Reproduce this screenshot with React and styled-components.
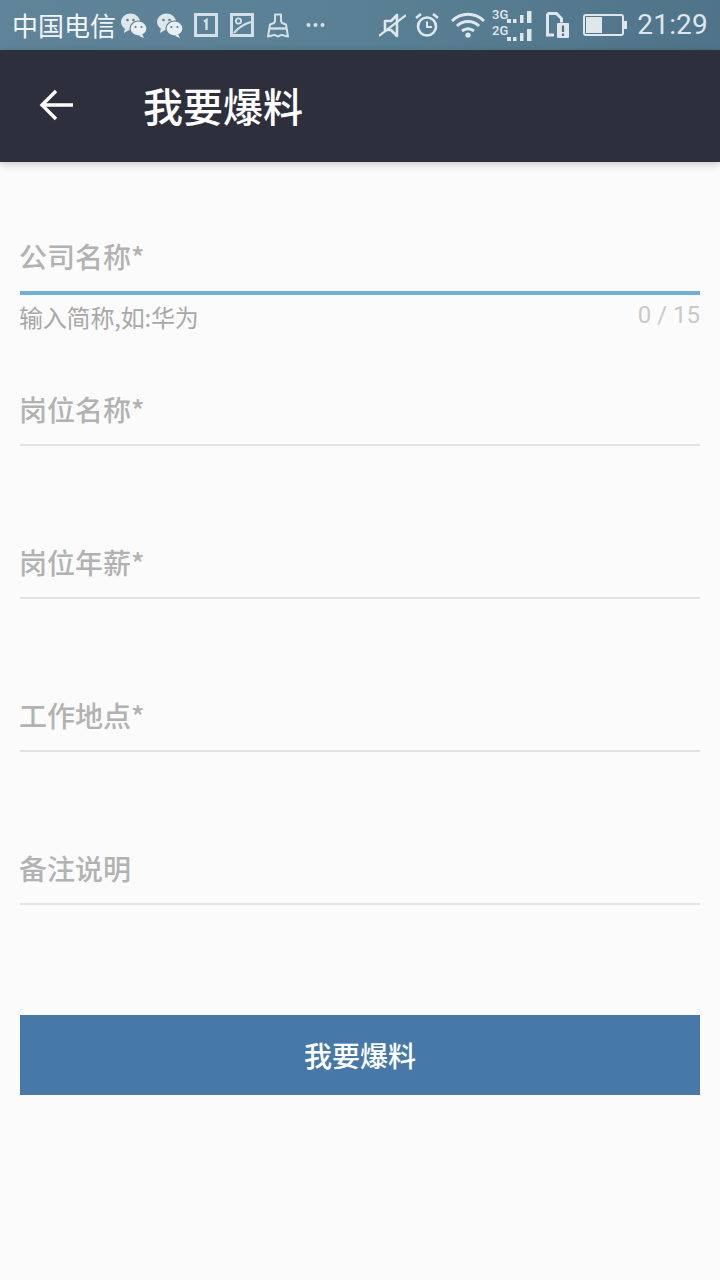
import React from 'react';
import styled, { createGlobalStyle } from 'styled-components';

const GlobalStyle = createGlobalStyle`
  html, body {
    margin: 0;
    padding: 0;
    background: #fbfbfb;
  }
  * {
    box-sizing: border-box;
  }
`;

const Page = styled.div`
  width: 720px;
  height: 1280px;
  overflow: hidden;
  background: #fbfbfb;
  font-family: "Noto Sans CJK SC", "Noto Sans", Roboto, sans-serif;
`;

const StatusBar = styled.div`
  height: 50px;
  display: flex;
  align-items: center;
  justify-content: space-between;
  padding: 0 12px 0 12px;
  background: linear-gradient(90deg, #5f8499 0%, #5a8095 50%, #4f7489 100%);
  color: #e8eef1;
`;

const StatusGroup = styled.div`
  display: flex;
  align-items: center;
`;

const Carrier = styled.span`
  font-size: 26px;
  line-height: 50px;
  color: #f2f5f7;
  margin-right: 5px;
`;

const Clock = styled.span`
  font-family: Roboto, sans-serif;
  font-size: 28px;
  line-height: 50px;
  letter-spacing: 0.2px;
  color: #dfe7eb;
  margin-left: 10px;
`;

const StatusIcon = styled.svg`
  display: block;
  flex: none;
  margin-left: ${(p) => p.$gap || 0}px;
`;

const TopBar = styled.header`
  height: 112px;
  display: flex;
  align-items: center;
  padding: 0 0 2px 39px;
  background: #2d303c;
  box-shadow: 0 2px 8px rgba(0, 0, 0, 0.22);
  position: relative;
`;

const BackIcon = styled.svg`
  display: block;
  flex: none;
  margin-right: 70px;
`;

const Title = styled.h1`
  margin: 0;
  font-size: 40px;
  line-height: 56px;
  font-weight: 500;
  color: #ffffff;
`;

const Form = styled.main`
  padding: 61px 20px 0;
  display: flex;
  flex-direction: column;
`;

const Field = styled.div`
  height: 153px;
`;

const Label = styled.div`
  font-size: 28px;
  font-weight: 500;
  line-height: 50px;
  padding-top: 8px;
  text-indent: -1px;
  color: #b2b2b2;
  border-bottom: ${(p) => (p.$active ? '4px solid #6fb0d9' : '2px solid #e2e2e2')};
  height: ${(p) => (p.$active ? '72px' : '70px')};
`;

const HelperRow = styled.div`
  display: flex;
  justify-content: space-between;
  align-items: flex-start;
`;

const Helper = styled.span`
  font-size: 24px;
  line-height: 44px;
  letter-spacing: -0.2px;
  margin-left: -1px;
  color: #a8a8a8;
`;

const Counter = styled.span`
  font-family: Roboto, sans-serif;
  font-size: 24px;
  line-height: 40px;
  color: #c9c9c9;
`;

const SubmitButton = styled.button`
  display: block;
  width: 100%;
  height: 80px;
  margin-top: 27px;
  padding: 0;
  border: 0;
  background: #4679a8;
  color: #ffffff;
  font-family: inherit;
  font-size: 28px;
  font-weight: 500;
`;

const Bubbles = ({ gap }) => (
  <StatusIcon $gap={gap} width="26" height="25" viewBox="0 0 26 25">
    <ellipse cx="9.5" cy="9" rx="9.5" ry="8.5" fill="#dfe7eb" />
    <path d="M4 15l-1 5 5-3z" fill="#dfe7eb" />
    <ellipse cx="17.5" cy="15.5" rx="8.5" ry="7.5" fill="#e8eef1" stroke="#5c8297" strokeWidth="1.2" />
    <path d="M21 21l2 4-5-2z" fill="#e8eef1" />
    <circle cx="6.5" cy="7" r="1.3" fill="#5c8297" />
    <circle cx="12.5" cy="7" r="1.3" fill="#5c8297" />
    <circle cx="14.5" cy="14" r="1.1" fill="#5c8297" />
    <circle cx="20.5" cy="14" r="1.1" fill="#5c8297" />
  </StatusIcon>
);

const fields = [
  { label: '公司名称*', active: true },
  { label: '岗位名称*' },
  { label: '岗位年薪*' },
  { label: '工作地点*' },
  { label: '备注说明' },
];

const App = () => (
  <Page>
    <GlobalStyle />
    <StatusBar>
      <StatusGroup>
        <Carrier>中国电信</Carrier>
        <Bubbles />
        <Bubbles gap={10} />
        <StatusIcon $gap={11} width="24" height="24" viewBox="0 0 24 24">
          <rect x="1.5" y="1.5" width="21" height="21" fill="none" stroke="#d5e0e6" strokeWidth="3" />
          <path d="M10 8.5l2.5-1.5v10" fill="none" stroke="#d5e0e6" strokeWidth="2.4" />
        </StatusIcon>
        <StatusIcon $gap={12} width="24" height="24" viewBox="0 0 24 24">
          <rect x="1.5" y="1.5" width="21" height="21" fill="none" stroke="#d5e0e6" strokeWidth="3" />
          <circle cx="8.5" cy="8" r="2.6" fill="none" stroke="#d5e0e6" strokeWidth="1.8" />
          <path d="M4 20 C9 14 14 11 21 9" fill="none" stroke="#d5e0e6" strokeWidth="2" />
        </StatusIcon>
        <StatusIcon $gap={13} width="22" height="25" viewBox="0 0 22 25">
          <path d="M8 1.5h6v6.5l1 2 4 1.5 2 12c-3 0-4-1.5-6-1.5s-3 1.5-4 1.5-2-1.5-4-1.5-4 1.5-6 1.5l2-12 4-1.5 1-2z" fill="none" stroke="#d5e0e6" strokeWidth="2" strokeLinejoin="round" />
          <path d="M2.5 15.5h17" stroke="#d5e0e6" strokeWidth="2.4" />
        </StatusIcon>
        <StatusIcon $gap={17} width="19" height="6" viewBox="0 0 19 6">
          <circle cx="2.5" cy="3" r="2" fill="#d5e0e6" />
          <circle cx="9.5" cy="3" r="2" fill="#d5e0e6" />
          <circle cx="16.5" cy="3" r="2" fill="#d5e0e6" />
        </StatusIcon>
      </StatusGroup>
      <StatusGroup>
        <StatusIcon width="27" height="25" viewBox="0 0 27 25">
          <path d="M6 8h6l6-6v21l-6-6H6z" fill="none" stroke="#dfe7eb" strokeWidth="2.6" strokeLinejoin="round" />
          <path d="M0 23L27 2" stroke="#dfe7eb" strokeWidth="2.2" />
        </StatusIcon>
        <StatusIcon $gap={9} width="24" height="24" viewBox="0 0 24 24">
          <circle cx="12" cy="13.5" r="9" fill="none" stroke="#dfe7eb" strokeWidth="2.6" />
          <path d="M12 8.5v5.5h5" fill="none" stroke="#dfe7eb" strokeWidth="2" />
          <path d="M1 5l5-4M23 5l-5-4" stroke="#dfe7eb" strokeWidth="2.6" />
        </StatusIcon>
        <StatusIcon $gap={12} width="34" height="26" viewBox="0 0 34 26">
          <path d="M1 9C10 0 24 0 33 9M6 14c6-6 16-6 22 0M11 19c4-3 8-3 12 0" fill="none" stroke="#dfe7eb" strokeWidth="3" />
          <circle cx="17" cy="23" r="2.6" fill="#dfe7eb" />
        </StatusIcon>
        <StatusIcon $gap={7} width="40" height="34" viewBox="0 0 40 34">
          <text x="0" y="11" fontFamily="Roboto, sans-serif" fontSize="13" fontWeight="500" fill="#dfe7eb">3G</text>
          <text x="0" y="27" fontFamily="Roboto, sans-serif" fontSize="13" fontWeight="500" fill="#dfe7eb">2G</text>
          <path d="M15 11h4v4h-4zM21 11h3.5v4H21zM28 7h3.5v8H28zM35 3h4.500v12H35zM15 29h4v4h-4zM21 29h3.500v4H21zM28 25h3.500v8H28zM35 21h4.500v12H35z" fill="#dfe7eb" />
        </StatusIcon>
        <StatusIcon $gap={14} width="23" height="26" viewBox="0 0 23 26">
          <path d="M1.500 1.500h9l5 5v4M8 23H1.500V1.500" fill="none" stroke="#dfe7eb" strokeWidth="3" />
          <rect x="11" y="11" width="12" height="15" rx="1" fill="#dfe7eb" />
          <path d="M17 13.500v6.500M17 21.500v2.500" stroke="#4f7489" strokeWidth="2.200" />
        </StatusIcon>
        <StatusIcon $gap={14} width="44" height="22" viewBox="0 0 44 22">
          <rect x="1" y="1" width="39" height="20" rx="2" fill="none" stroke="#dfe7eb" strokeWidth="2" />
          <rect x="3" y="3" width="16" height="16" fill="#dfe7eb" />
          <rect x="41" y="7" width="3" height="8" fill="#dfe7eb" />
        </StatusIcon>
        <Clock>21:29</Clock>
      </StatusGroup>
    </StatusBar>
    <TopBar>
      <BackIcon width="34" height="32" viewBox="0 0 34 32">
        <path d="M34 16H3M17 2L3 16l14 14" fill="none" stroke="#ffffff" strokeWidth="3.4" />
      </BackIcon>
      <Title>我要爆料</Title>
    </TopBar>
    <Form>
      {fields.map((field) => (
        <Field key={field.label}>
          <Label $active={field.active}>{field.label}</Label>
          {field.active && (
            <HelperRow>
              <Helper>输入简称,如:华为</Helper>
              <Counter>0 / 15</Counter>
            </HelperRow>
          )}
        </Field>
      ))}
      <SubmitButton>我要爆料</SubmitButton>
    </Form>
  </Page>
);

export default App;
